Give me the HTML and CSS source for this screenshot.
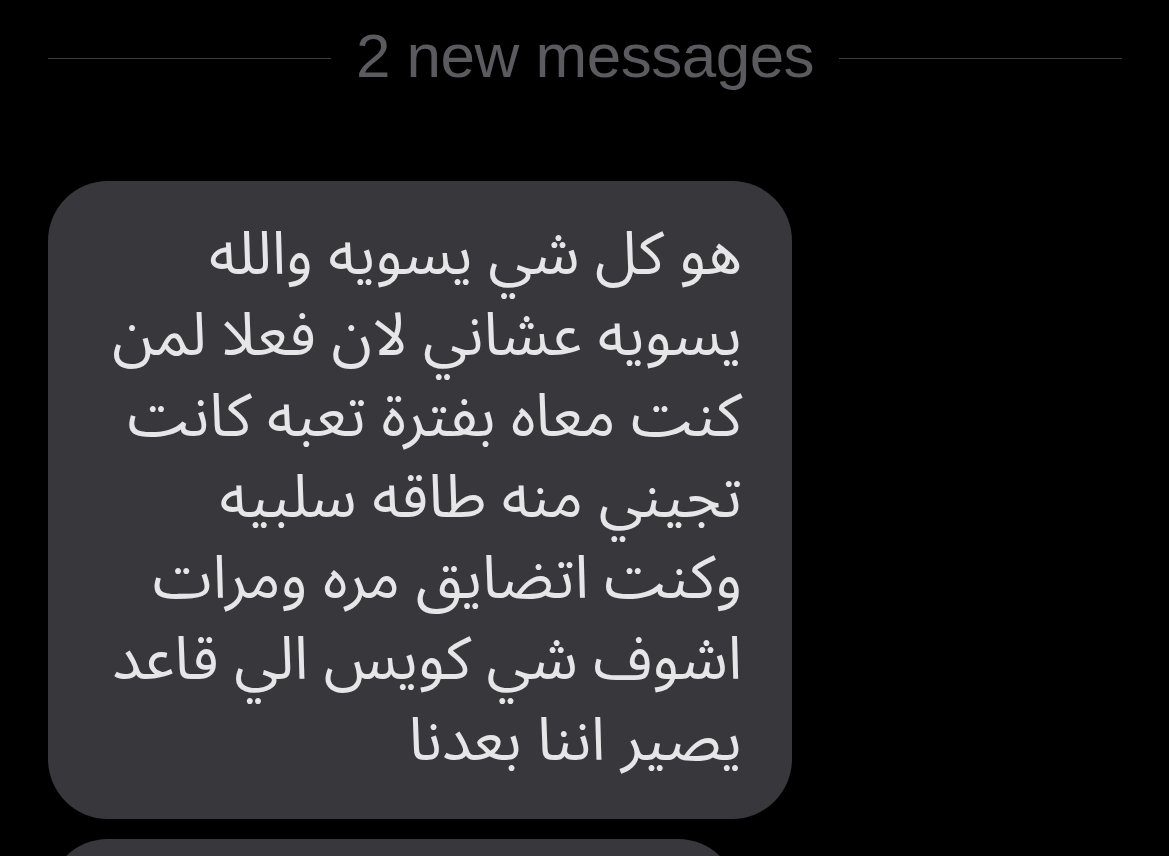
FILE: index.html
```html
<!DOCTYPE html>
<html lang="en">
<head>
<meta charset="utf-8">
<link rel="stylesheet" href="styles.css">
</head>
<body>
<div class="chat">
  <div class="divider">
    <span class="rule"></span>
    <span class="label">2 new messages</span>
    <span class="rule"></span>
  </div>
  <div class="bubble" dir="rtl" lang="ar">
    <div class="line">هو كل شي يسويه والله</div>
    <div class="line">يسويه عشاني لان فعلا لمن</div>
    <div class="line">كنت معاه بفترة تعبه كانت</div>
    <div class="line">تجيني منه طاقه سلبيه</div>
    <div class="line">وكنت اتضايق مره ومرات</div>
    <div class="line">اشوف شي كويس الي قاعد</div>
    <div class="line">يصير اننا بعدنا</div>
  </div>
  <div class="bubble next"></div>
</div>
</body>
</html>
```

FILE: styles.css
```css
html, body {
  margin: 0;
  padding: 0;
  background: #000;
  height: 100%;
  overflow: hidden;
}
.chat {
  padding: 0 47px 0 48px;
  display: flex;
  flex-direction: column;
}
.divider {
  display: flex;
  align-items: center;
  gap: 25px;
  height: 116px;
}
.rule {
  flex: 1;
  height: 1px;
  background: #3c3c40;
}
.label {
  font-family: "Liberation Sans", Arial, sans-serif;
  font-size: 62px;
  color: #5a5a5f;
  letter-spacing: -0.5px;
  line-height: 1;
  white-space: nowrap;
  margin-top: -4px;
}
.bubble {
  margin-top: 65px;
  width: 744px;
  box-sizing: border-box;
  background: #38383c;
  border-radius: 60px;
  padding: 34px 50px 37px 40px;
  font-family: "Noto Sans Arabic", "Noto Sans", "DejaVu Sans", sans-serif;
  font-size: 60px;
  line-height: 81px;
  color: #e6e6e8;
  text-align: right;
}
.line {
  white-space: nowrap;
}
.bubble.next {
  margin-top: 20px;
  height: 200px;
  width: 690px;
}
```
